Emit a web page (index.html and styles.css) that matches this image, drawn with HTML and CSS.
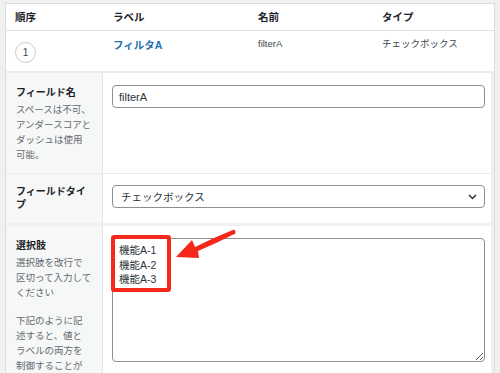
FILE: index.html
```html
<!DOCTYPE html>
<html lang="ja">
<head>
    <meta charset="UTF-8">
    <meta name="viewport" content="width=device-width, initial-scale=1.0">
    <title>フィールド設定</title>
    <link rel="stylesheet" href="styles.css">
</head>
<body>
    <div class="panel">
        <div class="list-head">
            <div class="cell">順序</div>
            <div class="cell">ラベル</div>
            <div class="cell">名前</div>
            <div class="cell">タイプ</div>
        </div>

        <div class="list-row">
            <div class="cell"><span class="order">1</span></div>
            <div class="cell"><a class="row-label">フィルタA</a></div>
            <div class="cell meta">filterA</div>
            <div class="cell meta">チェックボックス</div>
        </div>

        <div class="settings">
            <div class="setting">
                <div class="setting-label">
                    <div class="label-title">フィールド名</div>
                    <p class="label-desc">スペースは不可、<br>アンダースコアと<br>ダッシュは使用<br>可能。</p>
                </div>
                <div class="setting-input">
                    <input class="text-input" type="text" value="filterA">
                </div>
            </div>

            <div class="setting setting-type">
                <div class="setting-label">
                    <div class="label-title label-tight">フィールドタイプ</div>
                </div>
                <div class="setting-input">
                    <div class="select-box">
                        <span>チェックボックス</span>
                        <svg class="chevron" width="9" height="6" viewBox="0 0 9 6"><polyline points="1,1 4.5,4.5 8,1" fill="none" stroke="#2c3338" stroke-width="1.5"/></svg>
                    </div>
                </div>
            </div>

            <div class="setting">
                <div class="setting-label">
                    <div class="label-title">選択肢</div>
                    <p class="label-desc gap">選択肢を改行で<br>区切って入力して<br>ください</p>
                    <p class="label-desc">下記のように記<br>述すると、値と<br>ラベルの両方を<br>制御することが</p>
                </div>
                <div class="setting-input">
                    <div class="textarea-wrap">
                        <textarea class="choices" readonly>機能A-1
機能A-2
機能A-3</textarea>
                        <!-- 注釈 -->
                        <div class="mark-box"></div>
                        <svg class="mark-arrow" width="66" height="36" viewBox="0 0 66 36">
                            <path d="M4 31 L20 14 L23 21 Q43 11 62 3.5 Q64 5 63.5 7.5 Q45 17 26 25 L27 32 Z" fill="#f5281b"/>
                        </svg>
                    </div>
                </div>
            </div>
        </div>
    </div>
</body>
</html>
```

FILE: styles.css
```css
body {
    margin: 0;
    padding: 3px 5px 0 5px;
    background-color: #f0f0f1;
    font-family: "Liberation Sans", "Noto Sans CJK JP", sans-serif;
    color: #1d2327;
}

.panel {
    background-color: #fff;
    border: 1px solid #dcdcde;
}

.list-head,
.list-row {
    display: grid;
    grid-template-columns: 98px 145px 124px 1fr;
}

.list-head {
    height: 26px;
    align-items: center;
    border-bottom: 1px solid #e2e2e4;
    font-size: 10.5px;
    font-weight: bold;
    line-height: 14px;
}

.cell {
    padding: 0 9px;
}

.list-row {
    height: 40px;
    padding-top: 6px;
    box-sizing: border-box;
    line-height: 14px;
}

.order {
    display: flex;
    align-items: center;
    justify-content: center;
    width: 21px;
    height: 21px;
    margin-top: 5px;
    box-sizing: border-box;
    border: 1px solid #c8c9cc;
    border-radius: 50%;
    font-size: 10px;
    color: #3c434a;
}

.row-label {
    font-size: 10.5px;
    font-weight: bold;
    color: #2271b1;
}

.meta {
    font-size: 9.5px;
    color: #3c434a;
}

.settings {
    border-top: 2px solid #ececed;
    border-right: 3px solid #f0f0f1;
}

.setting {
    display: grid;
    grid-template-columns: 97px 1fr;
    border-bottom: 1px solid #ebebec;
}

.setting-type {
    border-bottom: 3px solid #f0f0f1;
}

.setting-label {
    background-color: #f6f7f7;
    border-right: 1px solid #e6e6e7;
    padding: 13px 10px 11px 10px;
}

.setting-type .setting-label {
    padding-top: 11px;
    padding-bottom: 12px;
}

.label-title {
    font-size: 10px;
    font-weight: bold;
    line-height: 14px;
}

.label-tight {
    line-height: 13px;
}

.label-desc {
    margin: 2px 0 0 0;
    font-size: 9.5px;
    line-height: 15px;
    color: #646970;
    white-space: nowrap;
}

.label-desc.gap {
    margin-bottom: 13px;
}

.setting-input {
    padding: 12px 6px 0 9px;
}

.setting-type .setting-input {
    padding-top: 11px;
}

.text-input {
    display: block;
    width: 100%;
    height: 23px;
    box-sizing: border-box;
    margin: 0;
    padding: 0 6px;
    border: 1px solid #8c8f94;
    border-radius: 4px;
    font-family: "Liberation Sans", "Noto Sans CJK JP", sans-serif;
    font-size: 11px;
    color: #2c3338;
}

.select-box {
    display: flex;
    align-items: center;
    justify-content: space-between;
    height: 23px;
    box-sizing: border-box;
    padding: 0 7px 0 8px;
    border: 1px solid #8c8f94;
    border-radius: 4px;
    font-size: 10.5px;
    color: #2c3338;
}

.textarea-wrap {
    position: relative;
}

.choices {
    display: block;
    width: 100%;
    height: 124px;
    box-sizing: border-box;
    margin: 0;
    padding: 4px 6px;
    border: 1px solid #8c8f94;
    border-radius: 4px;
    font-family: "Liberation Sans", "Noto Sans CJK JP", sans-serif;
    font-size: 10.5px;
    line-height: 14.5px;
    color: #2c3338;
    background-color: #fff;
}

.mark-box {
    position: absolute;
    left: -1px;
    top: -3px;
    width: 60px;
    height: 57px;
    box-sizing: border-box;
    border: 4px solid #f5281b;
    border-radius: 3px;
}

.mark-arrow {
    position: absolute;
    left: 60px;
    top: -12px;
}
```
